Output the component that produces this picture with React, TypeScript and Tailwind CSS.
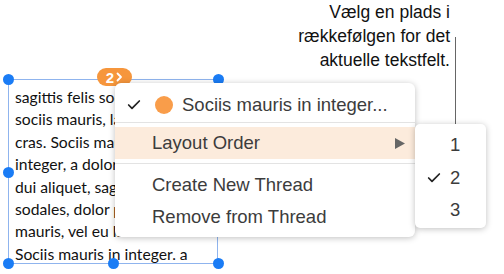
import { Check } from 'lucide-react';

const lines = [
  'sagittis felis sociis mauris',
  'sociis mauris, lacinia',
  'cras. Sociis mauris in',
  'integer, a dolor netus',
  'dui aliquet, sagittis',
  'sodales, dolor pharetra',
  'mauris, vel eu lacinia',
  'Sociis mauris in integer. a',
];

function Handle({ className }: { className: string }) {
  return <div className={`absolute w-[11px] h-[11px] rounded-full bg-[#1a7cf5] ${className}`} />;
}

export default function App() {
  return (
    <div className="relative w-[504px] h-[274px] bg-white overflow-hidden" style={{ fontFamily: '"Liberation Sans", Arial, sans-serif' }}>
      {/* Callout */}
      <div className="absolute right-[54px] top-0 text-right text-[17.5px] leading-[24px] text-[#111]">
        <p>Vælg en plads i</p>
        <p>rækkefølgen for det</p>
        <p>aktuelle tekstfelt.</p>
      </div>
      <div className="absolute left-[455px] top-[37px] w-px h-[102px] bg-[#666]" />

      {/* Text box */}
      <div className="absolute left-[8px] top-[79px] w-[210px] h-[185px] border border-[#8fb4ee]">
        <div className="pl-[6px] pt-[6px] text-[15.7px] leading-[22.4px] text-[#111] whitespace-nowrap overflow-hidden" style={{ fontFamily: 'Lato, "Noto Sans", sans-serif' }}>
          {lines.map(l => <p key={l}>{l}</p>)}
        </div>
      </div>
      <Handle className="left-[3px] top-[74px]" />
      <Handle className="left-[108px] top-[74px]" />
      <Handle className="left-[213px] top-[74px]" />
      <Handle className="left-[3px] top-[167px]" />
      <Handle className="left-[3px] top-[258px]" />
      <Handle className="left-[108px] top-[258px]" />
      <Handle className="left-[213px] top-[258px]" />

      {/* Thread badge */}
      <div className="absolute left-[97px] top-[68px] w-[35px] h-[18px] rounded-full bg-[#f6963c] flex items-center justify-center gap-[2px] text-white text-[15px] font-semibold leading-none">
        <span>2</span>
        <svg width="7" height="10" viewBox="0 0 7 10"><path d="M1.5 1.5 L5 5 L1.5 8.5" fill="none" stroke="white" strokeWidth="1.8" strokeLinecap="round" strokeLinejoin="round" /></svg>
      </div>

      {/* Context menu */}
      <div className="absolute left-[115px] top-[83px] w-[300px] h-[154px] bg-white rounded-[6px] shadow-[0_1px_6px_rgba(0,0,0,0.25)] pt-[6px] text-[18.5px] text-[#3c3c3c]">
        <div className="flex items-center h-[32px]">
          <Check className="ml-[11px] w-[16px] h-[16px] text-[#222]" strokeWidth={2.6} />
          <div className="ml-[13px] w-[18px] h-[18px] rounded-full bg-[#f99d4a]" />
          <span className="ml-[9px]">Sociis mauris in integer...</span>
        </div>
        <div className="mt-[1px] mb-[4px] h-px bg-[#e3e3e3]" />
        <div className="flex items-center h-[32px] bg-[#fcebdc] pl-[37px] pr-[10px]">
          <span className="flex-1">Layout Order</span>
          <svg width="10" height="11" viewBox="0 0 10 11"><path d="M0 0 L10 5.5 L0 11 Z" fill="#666" /></svg>
        </div>
        <div className="mt-[4px] mb-[5px] h-px bg-[#e3e3e3]" />
        <div className="flex items-center h-[32px] pl-[37px]">Create New Thread</div>
        <div className="flex items-center h-[32px] pl-[37px]">Remove from Thread</div>
      </div>

      {/* Submenu */}
      <div className="absolute left-[415px] top-[124px] w-[71px] h-[104px] bg-white rounded-[5px] shadow-[0_1px_6px_rgba(0,0,0,0.25)] pt-[4px] text-[18.5px] text-[#3c3c3c]">
        <div className="flex items-center h-[33px] pl-[35px]">1</div>
        <div className="flex items-center h-[33px] pl-[11px]">
          <Check className="w-[16px] h-[16px] text-[#222]" strokeWidth={2.6} />
          <span className="ml-[8px]">2</span>
        </div>
        <div className="flex items-center h-[31px] pl-[35px]">3</div>
      </div>
    </div>
  );
}
